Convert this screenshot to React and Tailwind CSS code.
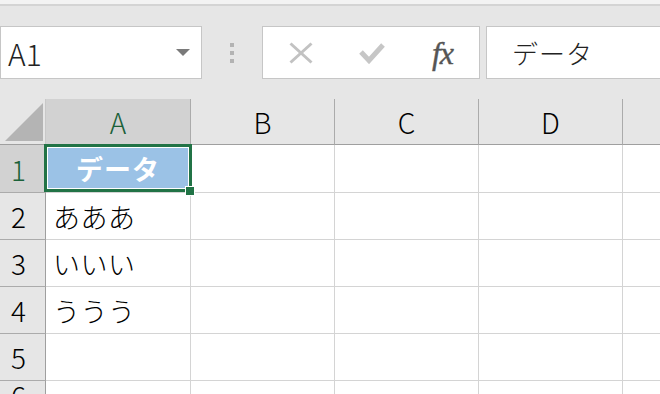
import React from "react";

const font = "font-['Noto_Sans_CJK_JP','Noto_Sans',sans-serif]";

function HeaderCell({ children, active, last }) {
  return (
    <div
      className={`flex items-center justify-center border-b border-b-[#9f9f9f] ${
        last ? "" : "border-r border-r-[#ababab]"
      } text-[28px] font-light leading-none ${active ? "bg-[#d2d2d2] text-[#1a6139]" : "bg-[#e6e6e6] text-black"}`}
    >
      {children}
    </div>
  );
}

function RowHead({ n, active }) {
  return (
    <div
      className={`flex items-center pl-[11px] border-r border-r-[#9f9f9f] border-b border-b-[#ababab] text-[28px] font-light leading-none ${
        active ? "bg-[#d2d2d2] text-[#1a6139]" : "bg-[#e6e6e6] text-black"
      }`}
    >
      {n}
    </div>
  );
}

function Cell({ children, last }) {
  return (
    <div
      className={`flex items-center pl-[7px] bg-white border-b border-b-[#d4d4d4] ${
        last ? "" : "border-r border-r-[#d4d4d4]"
      } text-[27px] font-light tracking-[0.5px] leading-none text-black`}
    >
      {children}
    </div>
  );
}

export default function App() {
  const rows = [
    { n: 1, a: "" },
    { n: 2, a: "あああ" },
    { n: 3, a: "いいい" },
    { n: 4, a: "ううう" },
    { n: 5, a: "" },
    { n: 6, a: "" },
  ];
  return (
    <div className={`w-[660px] h-[394px] overflow-hidden bg-[#e6e6e6] ${font}`}>
      <div className="h-[4px] bg-[#f3f3f3]" />
      <div className="h-[2px] bg-[#d4d4d4]" />
      <div className="flex mt-[20px] h-[53px]">
        <div className="w-[202px] border border-[#c6c6c6] bg-white flex items-center justify-between pl-[7px] pr-[11px]">
          <span className="text-[30px] font-light leading-none text-[#222]">A1</span>
          <svg width="14" height="7" viewBox="0 0 14 7">
            <polygon points="0,0 14,0 7,7" fill="#7a7a7a" />
          </svg>
        </div>
        <div className="w-[60px] flex flex-col items-center justify-center gap-[4px]">
          <div className="w-[4px] h-[4px] bg-[#b3b3b3]" />
          <div className="w-[4px] h-[4px] bg-[#b3b3b3]" />
          <div className="w-[4px] h-[4px] bg-[#b3b3b3]" />
        </div>
        <div className="w-[218px] border border-[#c6c6c6] bg-white flex items-center pl-[2px]">
          <div className="w-[71px] flex justify-center">
            <svg width="24" height="22" viewBox="0 0 24 22">
              <line x1="1.5" y1="1.5" x2="22.5" y2="20.5" stroke="#c2c2c2" strokeWidth="3" />
              <line x1="22.5" y1="1.5" x2="1.5" y2="20.5" stroke="#c2c2c2" strokeWidth="3" />
            </svg>
          </div>
          <div className="w-[71px] flex justify-center">
            <svg width="26" height="22" viewBox="0 0 26 22">
              <polyline points="2,10 10,18.5 24,3" fill="none" stroke="#c6c6c6" strokeWidth="5" />
            </svg>
          </div>
          <div className="w-[71px] flex justify-center">
            <span className="font-['Liberation_Serif',serif] italic text-[32px] leading-none text-[#555] tracking-[-1px] [-webkit-text-stroke:0.4px_#555]">
              fx
            </span>
          </div>
        </div>
        <div className="flex-1 ml-[6px] border border-r-0 border-[#c6c6c6] bg-white flex items-center pl-[25px]">
          <span className="text-[26px] font-light tracking-[1px] leading-none text-[#222]">データ</span>
        </div>
      </div>
      <div className="relative mt-[20px] grid grid-cols-[46px_145px_144px_144px_144px_1fr] grid-rows-[46px_48px_47px_47px_47px_47px_1fr]">
        <div className="relative bg-[#e6e6e6] border-r border-r-[#c8c8c8] border-b border-b-[#9f9f9f]">
          <svg className="absolute left-[5px] top-[4px]" width="38" height="38" viewBox="0 0 38 38">
            <polygon points="0,38 38,0 38,38" fill="#b4b4b4" />
          </svg>
        </div>
        <HeaderCell active>A</HeaderCell>
        <HeaderCell>B</HeaderCell>
        <HeaderCell>C</HeaderCell>
        <HeaderCell>D</HeaderCell>
        <HeaderCell last>{""}</HeaderCell>
        {rows.map((r) => (
          <React.Fragment key={r.n}>
            <RowHead n={r.n} active={r.n === 1} />
            <Cell>{r.a}</Cell>
            <Cell />
            <Cell />
            <Cell />
            <Cell last />
          </React.Fragment>
        ))}
        <div className="absolute left-[44px] top-[45px] w-[148px] h-[48px] border-[3px] border-[#217346]">
          <div className="w-full h-full border border-white bg-[#9bc2e6] flex items-center justify-center">
            <span className="text-[27px] font-bold tracking-[1px] leading-none text-white">データ</span>
          </div>
          <div className="absolute right-[-6px] bottom-[-7px] w-[10px] h-[10px] border border-white bg-[#217346]" />
        </div>
      </div>
    </div>
  );
}
